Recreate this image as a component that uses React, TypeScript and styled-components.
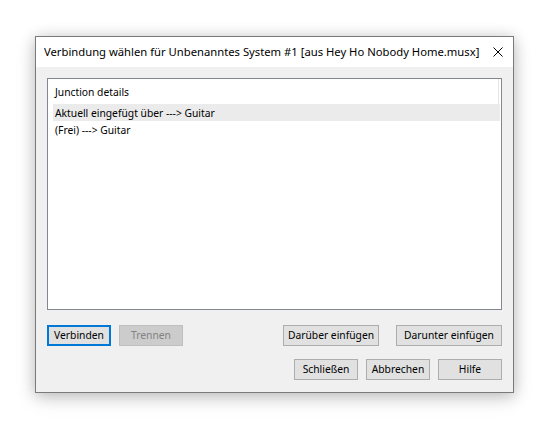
import React from "react";
import styled, { createGlobalStyle } from "styled-components";

const Global = createGlobalStyle`
  html, body {
    margin: 0;
    padding: 0;
    background: #ffffff;
  }
  body {
    font-family: "Noto Sans", "Open Sans", sans-serif;
    font-size: 10.3px;
    color: #000;
  }
`;

const Page = styled.div`
  width: 553px;
  height: 433px;
  padding: 36px 0 0 35px;
  box-sizing: border-box;
`;

const Window = styled.div`
  width: 479px;
  height: 357px;
  box-sizing: border-box;
  border: 1px solid #7a7a7a;
  background: #f0f0f0;
  display: flex;
  flex-direction: column;
  box-shadow: 0 2px 14px rgba(0, 0, 0, 0.22), 0 6px 20px rgba(0, 0, 0, 0.1);
`;

const TitleBar = styled.div`
  height: 30px;
  flex: none;
  background: #ffffff;
  display: flex;
  align-items: center;
  padding: 0 9px 0 8px;
`;

const Title = styled.div`
  flex: 1;
  min-width: 0;
  overflow: hidden;
  font-size: 11.25px;
  white-space: nowrap;
  color: #000;
  padding-bottom: 1px;
`;

const CloseButton = styled.div`
  flex: none;
  width: 10px;
  height: 10px;
  display: flex;
  align-items: center;
  justify-content: center;
  margin-right: 1px;
`;

const Client = styled.div`
  flex: 1;
  display: flex;
  flex-direction: column;
  padding: 11px 11px 12px 11px;
`;

const ListBox = styled.div`
  height: 232px;
  box-sizing: border-box;
  border: 1px solid #828790;
  background: #ffffff;
  display: flex;
  flex-direction: column;
  padding: 0 1px 0 5px;
`;

const ListHeader = styled.div`
  height: 25px;
  box-sizing: border-box;
  padding: 1px 0 0 2px;
  line-height: 24px;
  border-right: 1px solid #e5e5e5;
  margin-right: 1px;
`;

const ListRow = styled.div<{ $selected?: boolean }>`
  height: 17px;
  box-sizing: border-box;
  padding: 1px 0 0 2px;
  line-height: 16px;
  background: ${(p) => (p.$selected ? "#ebebeb" : "transparent")};
  white-space: nowrap;
`;

const ButtonRow = styled.div<{ $top: number }>`
  display: flex;
  align-items: center;
  margin-top: ${(p) => p.$top}px;
  height: 21px;
`;

const Spacer = styled.div`
  flex: 1;
`;

const Button = styled.button<{ $width: number; $gap?: number; $focused?: boolean }>`
  flex: none;
  width: ${(p) => p.$width}px;
  height: 21px;
  margin-left: ${(p) => p.$gap ?? 0}px;
  box-sizing: border-box;
  font-family: "Noto Sans", "Open Sans", sans-serif;
  font-size: 10.3px;
  line-height: 1;
  padding: 0;
  color: #000;
  background: #e1e1e1;
  border: ${(p) => (p.$focused ? "2px solid #0078d7" : "1px solid #adadad")};
  border-radius: 0;
  white-space: nowrap;
  &:disabled {
    color: #838383;
    background: #cccccc;
    border-color: #bfbfbf;
  }
`;

export default function App() {
  return (
    <Page>
      <Global />
      <Window>
        <TitleBar>
          <Title>Verbindung wählen für Unbenanntes System #1 [aus Hey Ho Nobody Home.musx]</Title>
          <CloseButton>
            <svg width="10" height="10" viewBox="0 0 10 10">
              <path d="M0.5 0.5 L9.5 9.5 M9.5 0.5 L0.5 9.5" stroke="#000" strokeWidth="1" />
            </svg>
          </CloseButton>
        </TitleBar>
        <Client>
          <ListBox>
            <ListHeader>Junction details</ListHeader>
            <ListRow $selected>Aktuell eingefügt über ---&gt; Guitar</ListRow>
            <ListRow>(Frei) ---&gt; Guitar</ListRow>
          </ListBox>
          <ButtonRow $top={15}>
            <Button $width={64} $focused>Verbinden</Button>
            <Button $width={64} $gap={8} disabled>Trennen</Button>
            <Spacer />
            <Button $width={96}>Darüber einfügen</Button>
            <Button $width={106} $gap={17}>Darunter einfügen</Button>
          </ButtonRow>
          <ButtonRow $top={13}>
            <Spacer />
            <Button $width={64}>Schließen</Button>
            <Button $width={64} $gap={8}>Abbrechen</Button>
            <Button $width={64} $gap={8}>Hilfe</Button>
          </ButtonRow>
        </Client>
      </Window>
    </Page>
  );
}
